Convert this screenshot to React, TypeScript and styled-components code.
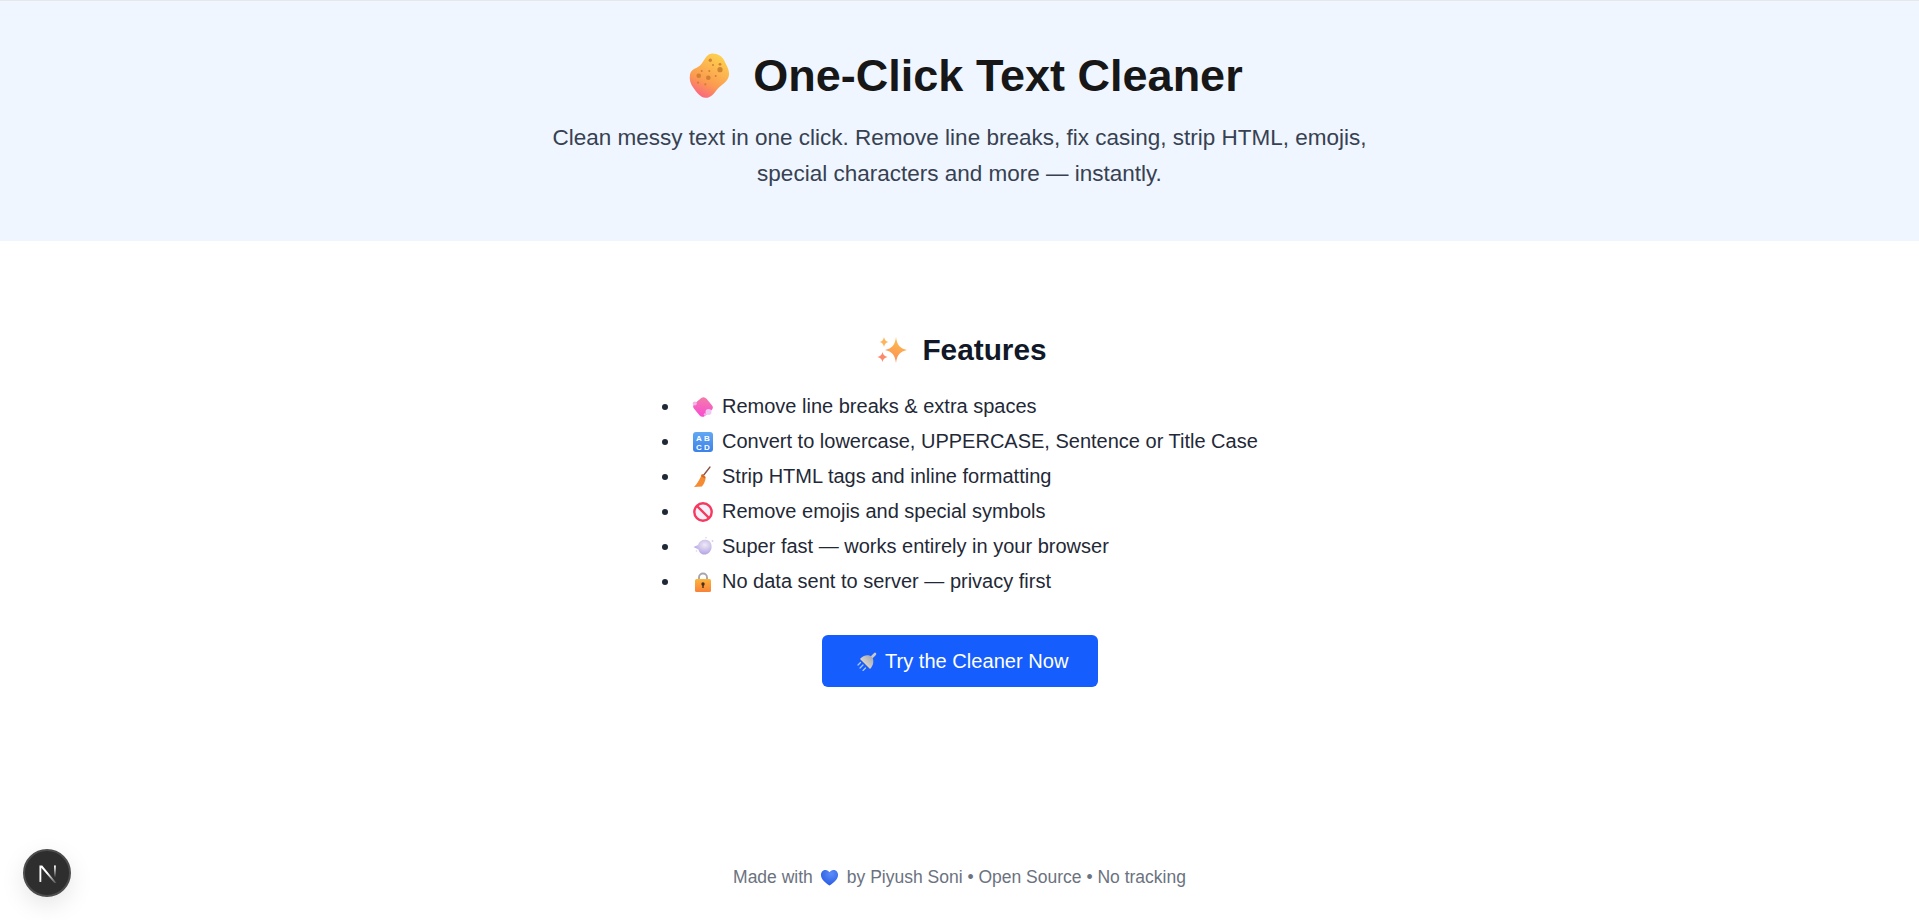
import React from "react";
import styled, { createGlobalStyle } from "styled-components";

const Global = createGlobalStyle`
  * { box-sizing: border-box; }
  html, body { margin: 0; padding: 0; background: #fff; }
  body { font-family: "Liberation Sans", Arial, sans-serif; color: #111827; }
`;
const Page = styled.div`
  height: 920px; display: flex; flex-direction: column; position: relative; border-top: 1px solid #e5e7eb; overflow: hidden;
`;
const Hero = styled.header`
  height: 240px; background: #eff6ff; padding-top: 48px; display: flex; flex-direction: column; align-items: center;
`;
const Title = styled.h1`
  margin: 0; padding-left: 10px; display: flex; align-items: center; gap: 17px; font-size: 45px; line-height: 54px; font-weight: 700; color: #171717;
`;
const Lead = styled.p`
  margin: 17px 0 0; width: 840px; text-align: center; font-size: 22.5px; line-height: 36px; color: #374151;
`;
const Main = styled.main`
  flex: 1; display: flex; flex-direction: column; align-items: center; padding-top: 91px;
`;
const Heading = styled.h2`
  margin: 0; padding-left: 4px; display: flex; align-items: center; gap: 14px; font-size: 29.8px; line-height: 36px; font-weight: 700; color: #111827;
`;
const List = styled.ul`
  margin: 21px 0 0; padding: 0; width: 640px; list-style: none; font-size: 20px; line-height: 35px; color: #1f2937;
`;
const Row = styled.li`
  display: flex; align-items: center; padding-left: 22.5px; height: 35px;
`;
const Bullet = styled.span`
  width: 6px; height: 6px; border-radius: 50%; background: #1f2937; margin-right: 24px; flex: none;
`;
const RowIcon = styled.span`
  width: 22px; height: 22px; display: flex; margin-right: 8px; flex: none;
`;
const Cta = styled.a`
  margin-top: 36px; padding-left: 7px; height: 52px; width: 276px; display: flex; align-items: center; justify-content: center; gap: 7.5px; background: #155dfc; color: #fff; border-radius: 6px; font-size: 20.1px;
`;
const Footer = styled.footer`
  position: absolute; left: 0; right: 0; bottom: 33px; display: flex; align-items: center; justify-content: center; gap: 7.5px; font-size: 17.5px; line-height: 20px; color: #6b7280;
`;
const Badge = styled.div`
  position: absolute; left: 23px; bottom: 23px; width: 48px; height: 48px; padding: 2px 0 0 2px; border-radius: 50%; background: #2e2e2e; border: 2px solid #4d4d4d; display: flex; align-items: center; justify-content: center; box-shadow: 0 8px 24px rgba(0,0,0,.1);
`;

type P = { size: number };

const Sponge = ({ size }: P) => (
  <svg width={size} height={size} viewBox="0 0 50 50">
    <defs>
      <linearGradient id="sp" x1="0.75" y1="0.05" x2="0.3" y2="1">
        <stop offset="0" stopColor="#fdd04e" />
        <stop offset="0.65" stopColor="#fb9a50" />
        <stop offset="1" stopColor="#fb6482" />
      </linearGradient>
    </defs>
    <path d="M25 2.700C31 2 36 5 38.500 10C40 14 43.500 18 43 24C42 31 36 33 31.500 38C27.500 43 25 47 19.500 46.800C14 46.500 10.500 41 7.500 37C4.500 33 3 28.500 4 23.500C5 18 10.500 17.500 14 14.500C18 11 19.500 3.500 25 2.700Z" fill="url(#sp)" />
    <g fill="#c97a2e" opacity="0.85">
      <circle cx="34" cy="18.7" r="2.6" /><circle cx="12.7" cy="24.7" r="2.300" /><circle cx="22.3" cy="26.7" r="2.300" />
      <circle cx="24.3" cy="9.3" r="1.700" /><circle cx="34" cy="13.3" r="1.400" /><circle cx="27" cy="14" r="1" />
      <circle cx="23.3" cy="20" r="1" /><circle cx="15.7" cy="20" r="1" /><circle cx="29.7" cy="25" r="1" />
      <circle cx="12" cy="31.7" r="1.100" /><circle cx="19.3" cy="33.3" r="1.100" />
    </g>
  </svg>
);
const Sparkles = ({ size }: P) => (
  <svg width={size} height={size} viewBox="0 0 32 32">
    <defs>
      <linearGradient id="sk" x1="0.6" y1="0" x2="0.3" y2="1">
        <stop offset="0" stopColor="#fec04f" /><stop offset="1" stopColor="#fb8a55" />
      </linearGradient>
    </defs>
    <path d="M20 3C21 11 24 14.500 31 16C24 17.500 21 21 20 29C19 21 16 17.500 9 16C16 14.500 19 11 20 3Z" fill="url(#sk)" />
    <path d="M8 3C8.600 6 10 7.400 12.500 8C10 8.600 8.600 10 8 13C7.400 10 6 8.600 3.500 8C6 7.400 7.400 6 8 3Z" fill="#fdb45a" />
    <path d="M6.500 18C7.200 21 8.500 22.300 11.500 23C8.500 23.700 7.200 25 6.500 28C5.800 25 4.500 23.700 1.500 23C4.500 22.300 5.800 21 6.500 18Z" fill="#fb8a6a" />
  </svg>
);
const Soap = ({ size }: P) => (
  <svg width={size} height={size} viewBox="0 0 22 22">
    <defs>
      <linearGradient id="so" x1="0.9" y1="0.1" x2="0.1" y2="0.9">
        <stop offset="0" stopColor="#f37aab" /><stop offset="1" stopColor="#f84ed0" />
      </linearGradient>
    </defs>
    <rect x="3" y="3" width="16" height="16" rx="4" transform="rotate(-40 11 11)" fill="url(#so)" />
    <circle cx="2.800" cy="7.500" r="2" fill="#f2b4ea" /><circle cx="16.500" cy="16" r="3" fill="#eecaf2" /><circle cx="13" cy="18.500" r="1.200" fill="#f2b4ea" />
  </svg>
);
const Abcd = ({ size }: P) => (
  <svg width={size} height={size} viewBox="0 0 22 22">
    <defs>
      <linearGradient id="ab" x1="0" y1="0" x2="0" y2="1"><stop offset="0" stopColor="#62a8f4" /><stop offset="1" stopColor="#3c82e8" /></linearGradient>
    </defs>
    <rect x="1" y="1" width="20" height="20" rx="3" fill="url(#ab)" />
    <g fill="#fff" fontFamily="Liberation Sans, Arial, sans-serif" fontWeight="700" fontSize="8" textAnchor="middle">
      <text x="7" y="10">A</text><text x="15" y="10">B</text>
      <text x="7" y="18.500">C</text><text x="15" y="18.500">D</text>
    </g>
  </svg>
);
const Broom = ({ size }: P) => (
  <svg width={size} height={size} viewBox="0 0 22 22">
    <path d="M18 1L11 10" stroke="#8a5040" strokeWidth="1.300" strokeLinecap="round" />
    <path d="M10 8L13.500 11C14 15 11 19 10 20.500L2 21C5 18 8 13 10 8Z" fill="#f58b32" />
    <path d="M10 8L13.500 11L12.800 12.500L9 10.200Z" fill="#d96a24" />
  </svg>
);
const NoEntry = ({ size }: P) => (
  <svg width={size} height={size} viewBox="0 0 22 22">
    <circle cx="11" cy="11" r="8.700" fill="#f6f0fb" stroke="#f6395e" strokeWidth="2.400" />
    <path d="M5 5l12 12" stroke="#f6395e" strokeWidth="2.400" />
  </svg>
);
const Puff = ({ size }: P) => (
  <svg width={size} height={size} viewBox="0 0 22 22">
    <defs>
      <radialGradient id="pf" cx="0.62" cy="0.35" r="0.7"><stop offset="0" stopColor="#eeeaf4" /><stop offset="1" stopColor="#ae9ce4" /></radialGradient>
    </defs>
    <path d="M1.500 11L6 9C7 5 11 3 15 4C19 5 20 9 19.500 12C19 16 15 19 12 18.500C9 18.500 7 16 6.500 13.500Z" fill="url(#pf)" />
    <circle cx="14" cy="1.800" r=".8" fill="#d9d0ea" /><circle cx="20.500" cy="5" r=".9" fill="#d9d0ea" /><circle cx="4.500" cy="15" r=".8" fill="#d9d0ea" />
  </svg>
);
const Lock = ({ size }: P) => (
  <svg width={size} height={size} viewBox="0 0 22 22">
    <defs>
      <linearGradient id="lk" x1="0" y1="0" x2="0" y2="1"><stop offset="0" stopColor="#fdb43a" /><stop offset="1" stopColor="#f8823a" /></linearGradient>
    </defs>
    <path d="M7 9V6.500a4 4 0 0 1 8 0V9" fill="none" stroke="#a8a4b0" strokeWidth="1.900" />
    <rect x="3" y="8" width="16" height="13" rx="1.500" fill="url(#lk)" />
    <circle cx="11" cy="13" r="1.700" fill="#4a2d1a" /><rect x="10.300" y="13.500" width="1.400" height="3.500" fill="#4a2d1a" />
  </svg>
);
const Shower = ({ size }: P) => (
  <svg width={size} height={size} viewBox="0 0 20 20">
    <defs>
      <linearGradient id="sh" x1="0.9" y1="0.1" x2="0.2" y2="0.8"><stop offset="0" stopColor="#a9a9ad" /><stop offset="1" stopColor="#e0e0e2" /></linearGradient>
    </defs>
    <path d="M14.500 6.500L18 3" stroke="#c8c8cc" strokeWidth="2.600" strokeLinecap="round" />
    <path d="M3 8C6 4 12 3 15 6C17 9 17 14 13 18Z" fill="url(#sh)" />
    <path d="M3 8L13 18" stroke="#8f8f94" strokeWidth="1" />
    <path d="M1 14L3.500 11.500M3 17L6 14M6 19.500L8.500 17" stroke="#a9c8ff" strokeWidth="1.200" strokeLinecap="round" />
  </svg>
);
const Heart = ({ size }: P) => (
  <svg width={size} height={size} viewBox="0 0 20 20">
    <defs>
      <radialGradient id="ht" cx="0.6" cy="0.25" r="0.9"><stop offset="0" stopColor="#5c8cf8" /><stop offset="1" stopColor="#1f52e0" /></radialGradient>
    </defs>
    <path d="M10 18.500C5.500 15.500 1 12 1 7.200C1 4 3.300 2 5.800 2C7.600 2 9.200 3 10 4.500C10.800 3 12.400 2 14.200 2C16.700 2 19 4 19 7.200C19 12 14.500 15.500 10 18.500Z" fill="url(#ht)" />
  </svg>
);
const NextMark = () => (
  <svg width="18" height="18" viewBox="52 52 78 78" fill="none">
    <defs>
      <linearGradient id="n1" x1="90" y1="85" x2="128" y2="128" gradientUnits="userSpaceOnUse"><stop stopColor="#fff" /><stop offset="1" stopColor="#fff" stopOpacity="0.15" /></linearGradient>
      <linearGradient id="n2" x1="120" y1="54" x2="120" y2="106" gradientUnits="userSpaceOnUse"><stop stopColor="#fff" /><stop offset="1" stopColor="#fff" stopOpacity="0" /></linearGradient>
    </defs>
    <path d="M128 130L66 54H54v72h8V64L122 134Z" fill="url(#n1)" />
    <rect x="117" y="54" width="8" height="72" fill="url(#n2)" />
  </svg>
);

const rows = [
  { Icon: Soap, text: "Remove line breaks & extra spaces" },
  { Icon: Abcd, text: "Convert to lowercase, UPPERCASE, Sentence or Title Case" },
  { Icon: Broom, text: "Strip HTML tags and inline formatting" },
  { Icon: NoEntry, text: "Remove emojis and special symbols" },
  { Icon: Puff, text: "Super fast — works entirely in your browser" },
  { Icon: Lock, text: "No data sent to server — privacy first" },
];

export default function App() {
  return (
    <Page>
      <Global />
      <Hero>
        <Title><Sponge size={50} />One-Click Text Cleaner</Title>
        <Lead>Clean messy text in one click. Remove line breaks, fix casing, strip HTML, emojis, special characters and more — instantly.</Lead>
      </Hero>
      <Main>
        <Heading><Sparkles size={32} />Features</Heading>
        <List>
          {rows.map(({ Icon, text }) => (
            <Row key={text}>
              <Bullet />
              <RowIcon><Icon size={22} /></RowIcon>
              {text}
            </Row>
          ))}
        </List>
        <Cta><Shower size={20} />Try the Cleaner Now</Cta>
      </Main>
      <Footer>Made with <Heart size={19} /> by Piyush Soni • Open Source • No tracking</Footer>
      <Badge><NextMark /></Badge>
    </Page>
  );
}
